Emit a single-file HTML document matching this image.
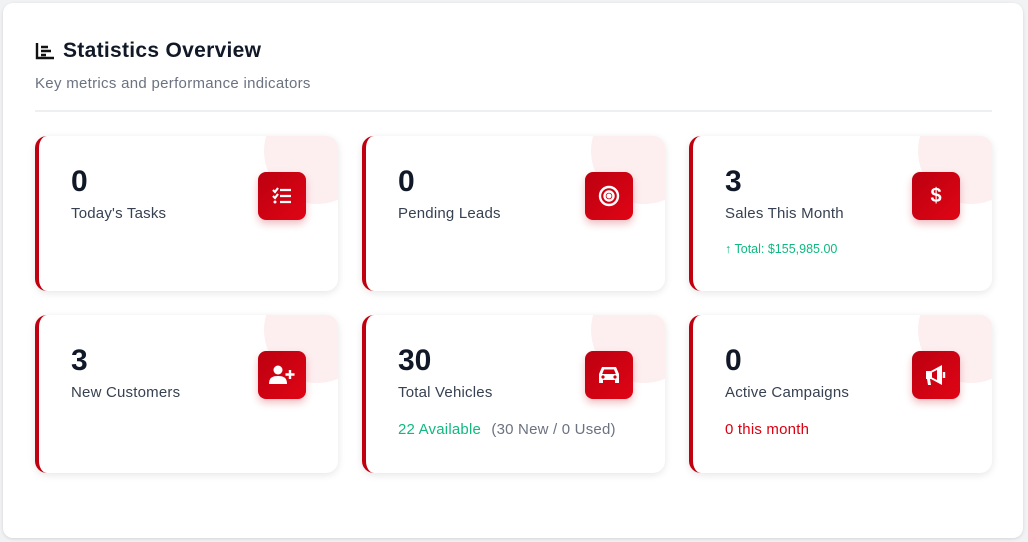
<!DOCTYPE html>
<html><head><style>
*{box-sizing:border-box;margin:0;padding:0}
body{width:1028px;height:542px;background:#f1f2f4;font-family:"Liberation Sans",sans-serif;overflow:hidden}
.panel{position:absolute;left:3px;top:3px;width:1020px;height:535px;background:#fff;border-radius:10px;box-shadow:0 1px 3px rgba(0,0,0,.12)}
.title{position:absolute;left:32px;top:36px;font-size:21px;font-weight:bold;color:#111827;display:flex;align-items:center;gap:8px;letter-spacing:0.3px}
.sub{position:absolute;left:32px;top:72px;font-size:15px;color:#6b7280;letter-spacing:0.3px}
.hr{position:absolute;left:32px;top:107px;width:957px;height:2px;background:#eeeff1}
.card{position:absolute;width:303px;height:155px;background:#fff;border-radius:12px;box-shadow:0 2px 8px rgba(0,0,0,.10);overflow:hidden;border-left:4px solid #c1000f}
.card .circ{position:absolute;right:-32px;top:-38px;width:106px;height:106px;border-radius:50%;background:#fdeef0}
.num{position:absolute;left:32px;top:29px;font-size:30px;font-weight:bold;color:#111827}
.lbl{position:absolute;left:32px;top:69px;font-size:15px;color:#374151;letter-spacing:0.2px}
.ex{position:absolute;left:32px;top:106px;font-size:13px}
.ic{position:absolute;left:219px;top:36px;width:48px;height:48px;border-radius:8px;background:linear-gradient(135deg,#bb0010,#e00515);box-shadow:0 4px 8px rgba(200,0,20,.25);display:flex;align-items:center;justify-content:center;color:#fff;font-weight:bold;font-size:20px}
</style></head><body>
<div class="panel">
<div class="title"><svg width="20" height="18" viewBox="0 0 20 18"><path d="M2 1v15h17" stroke="#111" stroke-width="2.4" fill="none"/><path d="M6 5h7M6 9h10M6 13h5" stroke="#111" stroke-width="2.4"/></svg>Statistics Overview</div>
<div class="sub">Key metrics and performance indicators</div>
<div class="hr"></div>
</div>

<div class="card" style="left:35px;top:136px"><div class="circ"></div><div class="num">0</div><div class="lbl">Today's Tasks</div>
<div class="ic"><svg width="20" height="18" viewBox="0 0 20 18" fill="none" stroke="#fff" stroke-width="2.2"><path d="M1 3l2 2 3-4M1 9l2 2 3-4"/><circle cx="3" cy="15" r="1.5" fill="#fff" stroke="none"/><path d="M8 3h11M8 9h11M8 15h11"/></svg></div></div>

<div class="card" style="left:362px;top:136px"><div class="circ"></div><div class="num">0</div><div class="lbl">Pending Leads</div>
<div class="ic"><svg width="22" height="22" viewBox="0 0 22 22" fill="none" stroke="#fff" stroke-width="2.4"><circle cx="11" cy="11" r="9"/><circle cx="11" cy="11" r="4.5"/><circle cx="11" cy="11" r="1.3" fill="#fff"/></svg></div></div>

<div class="card" style="left:689px;top:136px"><div class="circ"></div><div class="num">3</div><div class="lbl">Sales This Month</div>
<div class="ic">$</div><div class="ex" style="color:#10b981;font-size:12.5px;top:106px"><b>↑</b> Total: $155,985.00</div></div>

<div class="card" style="left:35px;top:315px;height:158px"><div class="circ"></div><div class="num">3</div><div class="lbl">New Customers</div>
<div class="ic"><svg width="26" height="20" viewBox="0 0 26 20" fill="#fff"><circle cx="9" cy="5" r="4.5"/><path d="M0 19c0-6 3-8 9-8s9 2 9 8z"/><path d="M21 5v9M16.5 9.5h9" stroke="#fff" stroke-width="2.4"/></svg></div></div>

<div class="card" style="left:362px;top:315px;height:158px"><div class="circ"></div><div class="num">30</div><div class="lbl">Total Vehicles</div>
<div class="ic"><svg width="24" height="20" viewBox="0 0 24 20" fill="#fff"><path d="M5 2h14l3 7v9h-4v-3H6v3H2V9z"/><path d="M7 4.5h10l1.8 4.5H5.2z" fill="#d00012"/><circle cx="6" cy="12" r="1.6" fill="#d00012"/><circle cx="18" cy="12" r="1.6" fill="#d00012"/></svg></div>
<div class="ex" style="font-size:15px;top:106px;letter-spacing:0.2px"><span style="color:#10b981">22 Available</span> <span style="color:#6b7280;margin-left:6px">(30 New / 0 Used)</span></div></div>

<div class="card" style="left:689px;top:315px;height:158px"><div class="circ"></div><div class="num">0</div><div class="lbl">Active Campaigns</div>
<div class="ic"><svg width="24" height="22" viewBox="0 0 24 22" fill="#fff"><path d="M2 7h5l11-6v20L7 15H6l1 6H4l-1-6H2z"/><path d="M20 8v6" stroke="#fff" stroke-width="2.4"/><path d="M13 6v10L8 13.5V8.5z" fill="#d00012"/></svg></div>
<div class="ex" style="color:#dc0010;font-size:15px;top:106px;letter-spacing:0.2px">0 this month</div></div>
</body></html>
